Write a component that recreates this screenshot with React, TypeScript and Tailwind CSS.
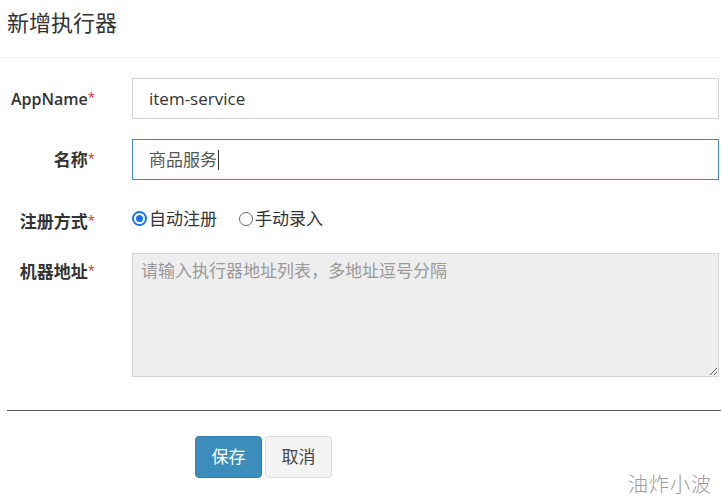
import React from "react";

const cjk = "font-['Open_Sans','Noto_Sans_CJK_SC',sans-serif]";

function Label({ text, latin = false }: { text: string; latin?: boolean }) {
  return (
    <div
      className={`w-[95px] shrink-0 text-right leading-[22px] text-[#333] ${
        latin ? "text-[16px] font-semibold" : "text-[17px] font-bold"
      }`}
    >
      {text}
      <span className="relative top-[-3px] text-[13px] font-normal text-[#e0262b]">*</span>
    </div>
  );
}

function Radio({ checked, label }: { checked?: boolean; label: string }) {
  return (
    <span className="flex items-center">
      {checked ? (
        <span className="flex h-[15px] w-[15px] items-center justify-center rounded-full border-2 border-[#1a73e8] bg-white">
          <span className="h-[7px] w-[7px] rounded-full bg-[#1a73e8]" />
        </span>
      ) : (
        <span className="h-[14px] w-[14px] rounded-full border border-[#666] bg-white" />
      )}
      <span className="ml-[2px] text-[17px] leading-[22px] text-[#333]">{label}</span>
    </span>
  );
}

export default function App() {
  return (
    <div className={`relative h-[503px] w-[721px] overflow-hidden bg-white ${cjk}`}>
      {/* Header */}
      <div className="h-[58px] border-b border-[#f0f0f0] pl-[7px] pt-[6px] text-[22px] leading-[32px] text-[#333]">
        新增执行器
      </div>

      {/* Form */}
      <div className="flex flex-col gap-[20px] pt-[20px]">
        <div className="flex">
          <div className="pt-[10px]">
            <Label text="AppName" latin />
          </div>
          <div className="ml-[37px] flex h-[41px] w-[587px] items-center border border-[#d4d4d4] px-[16px] text-[17px] text-[#333]">
            item-service
          </div>
        </div>

        <div className="flex">
          <div className="pt-[10px]">
            <Label text="名称" />
          </div>
          <div className="ml-[37px] flex h-[41px] w-[587px] items-center border border-[#3c8dbc] px-[16px] text-[17px] text-[#555]">
            商品服务
            <span className="ml-[1px] h-[20px] w-px bg-[#333]" />
          </div>
        </div>

        <div className="flex h-[33px]">
          <div className="pt-[11px]">
            <Label text="注册方式" />
          </div>
          <div className="ml-[37px] flex gap-[22px] pt-[4px]">
            <Radio checked label="自动注册" />
            <Radio label="手动录入" />
          </div>
        </div>

        <div className="flex">
          <div className="pt-[8px]">
            <Label text="机器地址" />
          </div>
          <textarea
            readOnly
            placeholder="请输入执行器地址列表，多地址逗号分隔"
            className="ml-[37px] h-[124px] w-[587px] border border-[#d4d4d4] bg-[#eeeeee] px-[8px] py-[5px] text-[17px] leading-[24px] text-[#555] outline-none placeholder:text-[#999]"
          />
        </div>
      </div>

      <div className="ml-[7px] mt-[33px] border-t border-[#595959]" />

      <div className="ml-[195px] mt-[25px] flex gap-[3px]">
        <button className="h-[42px] w-[67px] rounded-[4px] border border-[#367fa9] bg-[#3c8dbc] text-[17px] text-white">
          保存
        </button>
        <button className="h-[42px] w-[67px] rounded-[4px] border border-[#ddd] bg-[#f4f4f4] text-[17px] text-[#444]">
          取消
        </button>
      </div>

      <div className="absolute right-[9px] top-[470px] text-[20px] font-light tracking-[1px] text-[#9a9a9a]">
        油炸小波
      </div>
    </div>
  );
}
